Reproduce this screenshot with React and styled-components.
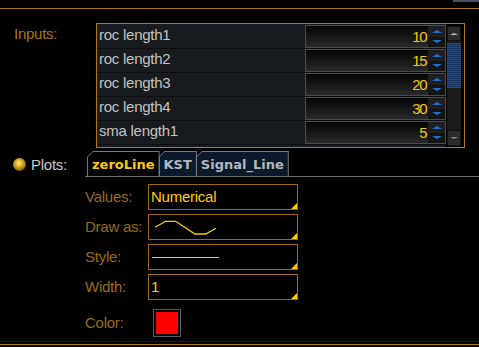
import React from "react";
import styled, { createGlobalStyle } from "styled-components";

const ORANGE = "#b07a10";
const YELLOW = "#ffcc00";

const GlobalStyle = createGlobalStyle`
  html, body {
    margin: 0;
    padding: 0;
    background: #000;
  }
  body {
    font-family: "Liberation Sans", Arial, sans-serif;
    letter-spacing: -0.25px;
  }
`;

const Page = styled.div`
  width: 479px;
  height: 347px;
  overflow: hidden;
  background: #000;
  display: flex;
  flex-direction: column;
`;

const TopStrip = styled.div`
  height: 8px;
  display: flex;
  justify-content: flex-end;
  border-bottom: 1px solid ${ORANGE};
`;

const TopStub = styled.div`
  width: 26px;
  height: 2px;
  background: #48505e;
`;

const InputsSection = styled.div`
  display: flex;
  margin-top: 14px;
`;

const SectionLabel = styled.div`
  width: 96px;
  box-sizing: border-box;
  padding-left: 14px;
  font-size: 15px;
  line-height: 22px;
  color: #a87418;
`;

const InputBox = styled.div`
  width: 369px;
  height: 125px;
  box-sizing: border-box;
  border: 1px solid ${ORANGE};
  display: flex;
  padding-right: 3px;
`;

const ParamList = styled.div`
  width: 349px;
  padding-top: 1px;
  background: #171b1f;
  display: flex;
  flex-direction: column;
`;

const ParamRow = styled.div`
  display: flex;
  height: 24px;
  box-sizing: border-box;
  border-bottom: 1px solid #0c0e10;
  background: #171b1f;
`;

const ParamName = styled.div`
  width: 208px;
  padding-left: 2px;
  box-sizing: border-box;
  font-size: 15px;
  line-height: 20px;
  color: #c4c4c4;
`;

const SpinBox = styled.div`
  flex: 1;
  display: flex;
  box-sizing: border-box;
  border: 1px solid #454b51;
  background: linear-gradient(#050505, #292929);
`;

const SpinValue = styled.div`
  flex: 1;
  text-align: right;
  padding-right: 2px;
  font-size: 15px;
  letter-spacing: -1.5px;
  line-height: 21px;
  color: #f5c518;
`;

const SpinButtons = styled.div`
  width: 17px;
  display: flex;
  flex-direction: column;
`;

const SpinButton = styled.div`
  flex: 1;
  display: flex;
  align-items: center;
  justify-content: center;
  background: ${(p) => (p.$down ? "#141414" : "#1f1f1f")};
`;

const Arrow = styled.div`
  width: 0;
  height: 0;
  border-left: ${(p) => p.$size}px solid transparent;
  border-right: ${(p) => p.$size}px solid transparent;
  ${(p) =>
    p.$down
      ? `border-top: ${Math.round(p.$size * 0.6)}px solid ${p.$color};`
      : `border-bottom: ${Math.round(p.$size * 0.6)}px solid ${p.$color};`}
`;

const ScrollBar = styled.div`
  width: 14px;
  margin: 2px 0 1px 1px;
  display: flex;
  flex-direction: column;
  background: #1b1b1b;
`;

const ScrollButton = styled.div`
  height: ${(p) => p.$h}px;
  display: flex;
  align-items: center;
  justify-content: center;
  background: #2b2b2b;
  box-sizing: border-box;
  border: 1px solid #111;
`;

const ScrollThumb = styled.div`
  height: 45px;
  margin-top: 2px;
  background: repeating-linear-gradient(#1f4a86 0 1px, #15335f 1px 2px);
`;

const ScrollTrack = styled.div`
  flex: 1;
`;

const PlotsSection = styled.div`
  display: flex;
  margin-top: 3px;
`;

const PlotsLabel = styled.div`
  width: 85px;
  box-sizing: border-box;
  padding-left: 13px;
  display: flex;
  align-items: center;
  gap: 5px;
  font-size: 15px;
  color: #c8c8c8;
`;

const Radio = styled.div`
  width: 13px;
  height: 13px;
  border-radius: 50%;
  background: radial-gradient(circle at 45% 40%, #fff0a0 0, #f0c030 25%, #b88410 55%, #5a4010 80%, #3a2a08 100%);
`;

const TabStrip = styled.div`
  flex: 1;
  display: flex;
  padding-left: 2px;
  border-bottom: 1px solid #707070;
`;

const Tab = styled.div`
  height: 25px;
  box-sizing: border-box;
  padding: 1px 1px 0 1px;
  margin-right: -1px;
  background: #777;
  clip-path: polygon(6px 0, 100% 0, 100% 100%, 0 100%, 0 6px);
`;

const TabFace = styled.div`
  height: 100%;
  padding: 0 4px;
  background: ${(p) => (p.$active ? "#000" : "#0a1a2c")};
  clip-path: polygon(5px 0, 100% 0, 100% 100%, 0 100%, 0 5px);
  font-family: "DejaVu Sans", sans-serif;
  font-weight: bold;
  font-size: 13px;
  letter-spacing: 0;
  line-height: 26px;
  color: ${(p) => (p.$active ? YELLOW : "#b4b8bc")};
`;

const Form = styled.div`
  margin-top: 7px;
  padding-left: 85px;
  display: flex;
  flex-direction: column;
  gap: 4px;
`;

const FormRow = styled.div`
  display: flex;
  align-items: center;
  height: ${(p) => p.$h || 26}px;
  margin-top: ${(p) => p.$mt || 0}px;
`;

const FormLabel = styled.div`
  width: 63px;
  font-size: 15px;
  line-height: 24px;
  color: #9a6c14;
`;

const Field = styled.div`
  position: relative;
  width: 150px;
  height: 26px;
  box-sizing: border-box;
  border: 1px solid #9c6a08;
  padding-left: 2px;
  display: flex;
  align-items: center;
  font-size: 15px;
  line-height: 22px;
  color: ${YELLOW};
  &::after {
    content: "";
    position: absolute;
    right: 0;
    bottom: 0;
    width: 6px;
    height: 6px;
    background: ${YELLOW};
    clip-path: polygon(100% 0, 100% 100%, 0 100%);
  }
`;

const Swatch = styled.div`
  width: 28px;
  height: 28px;
  margin-left: 5px;
  box-sizing: border-box;
  border: 1px solid #4f5863;
  padding: 2px;
  background: #000;
  &::before {
    content: "";
    display: block;
    width: 100%;
    height: 100%;
    background: ${(p) => p.$color};
  }
`;

const Footer = styled.div`
  margin-top: 4px;
  height: 2px;
  border-top: 1px solid #1c1c1c;
  border-bottom: 1px solid ${ORANGE};
`;

const params = [
  { name: "roc length1", value: 10 },
  { name: "roc length2", value: 15 },
  { name: "roc length3", value: 20 },
  { name: "roc length4", value: 30 },
  { name: "sma length1", value: 5 },
];

const tabs = ["zeroLine", "KST", "Signal_Line"];

export default function App() {
  return (
    <Page>
      <GlobalStyle />
      <TopStrip>
        <TopStub />
      </TopStrip>

      <InputsSection>
        <SectionLabel>Inputs:</SectionLabel>
        <InputBox>
          <ParamList>
            {params.map((p) => (
              <ParamRow key={p.name}>
                <ParamName>{p.name}</ParamName>
                <SpinBox>
                  <SpinValue>{p.value}</SpinValue>
                  <SpinButtons>
                    <SpinButton>
                      <Arrow $size={5} $color="#1f6fd6" />
                    </SpinButton>
                    <SpinButton $down>
                      <Arrow $size={5} $color="#1f6fd6" $down />
                    </SpinButton>
                  </SpinButtons>
                </SpinBox>
              </ParamRow>
            ))}
          </ParamList>
          <ScrollBar>
            <ScrollButton $h={15}>
              <Arrow $size={4} $color="#c0c0c0" />
            </ScrollButton>
            <ScrollThumb />
            <ScrollTrack />
            <ScrollButton $h={16}>
              <Arrow $size={4} $color="#8a8a8a" $down />
            </ScrollButton>
          </ScrollBar>
        </InputBox>
      </InputsSection>

      <PlotsSection>
        <PlotsLabel>
          <Radio />
          Plots:
        </PlotsLabel>
        <TabStrip>
          {tabs.map((t, i) => (
            <Tab key={t}>
              <TabFace $active={i === 0}>{t}</TabFace>
            </Tab>
          ))}
        </TabStrip>
      </PlotsSection>

      <Form>
        <FormRow>
          <FormLabel>Values:</FormLabel>
          <Field>Numerical</Field>
        </FormRow>
        <FormRow>
          <FormLabel>Draw as:</FormLabel>
          <Field>
            <svg width="70" height="24" viewBox="0 0 70 24">
              <polyline
                points="4,12.3 14.7,6.3 24.7,6.3 44,19 54.7,19 65,13.3"
                fill="none"
                stroke={YELLOW}
                strokeWidth="1.3"
              />
            </svg>
          </Field>
        </FormRow>
        <FormRow>
          <FormLabel>Style:</FormLabel>
          <Field>
            <svg width="70" height="24" viewBox="0 0 70 24">
              <line x1="1" y1="12.5" x2="68" y2="12.5" stroke={YELLOW} strokeWidth="1" />
            </svg>
          </Field>
        </FormRow>
        <FormRow>
          <FormLabel>Width:</FormLabel>
          <Field>1</Field>
        </FormRow>
        <FormRow $h={28} $mt={5}>
          <FormLabel>Color:</FormLabel>
          <Swatch $color="#ff0000" />
        </FormRow>
      </Form>

      <Footer />
    </Page>
  );
}
